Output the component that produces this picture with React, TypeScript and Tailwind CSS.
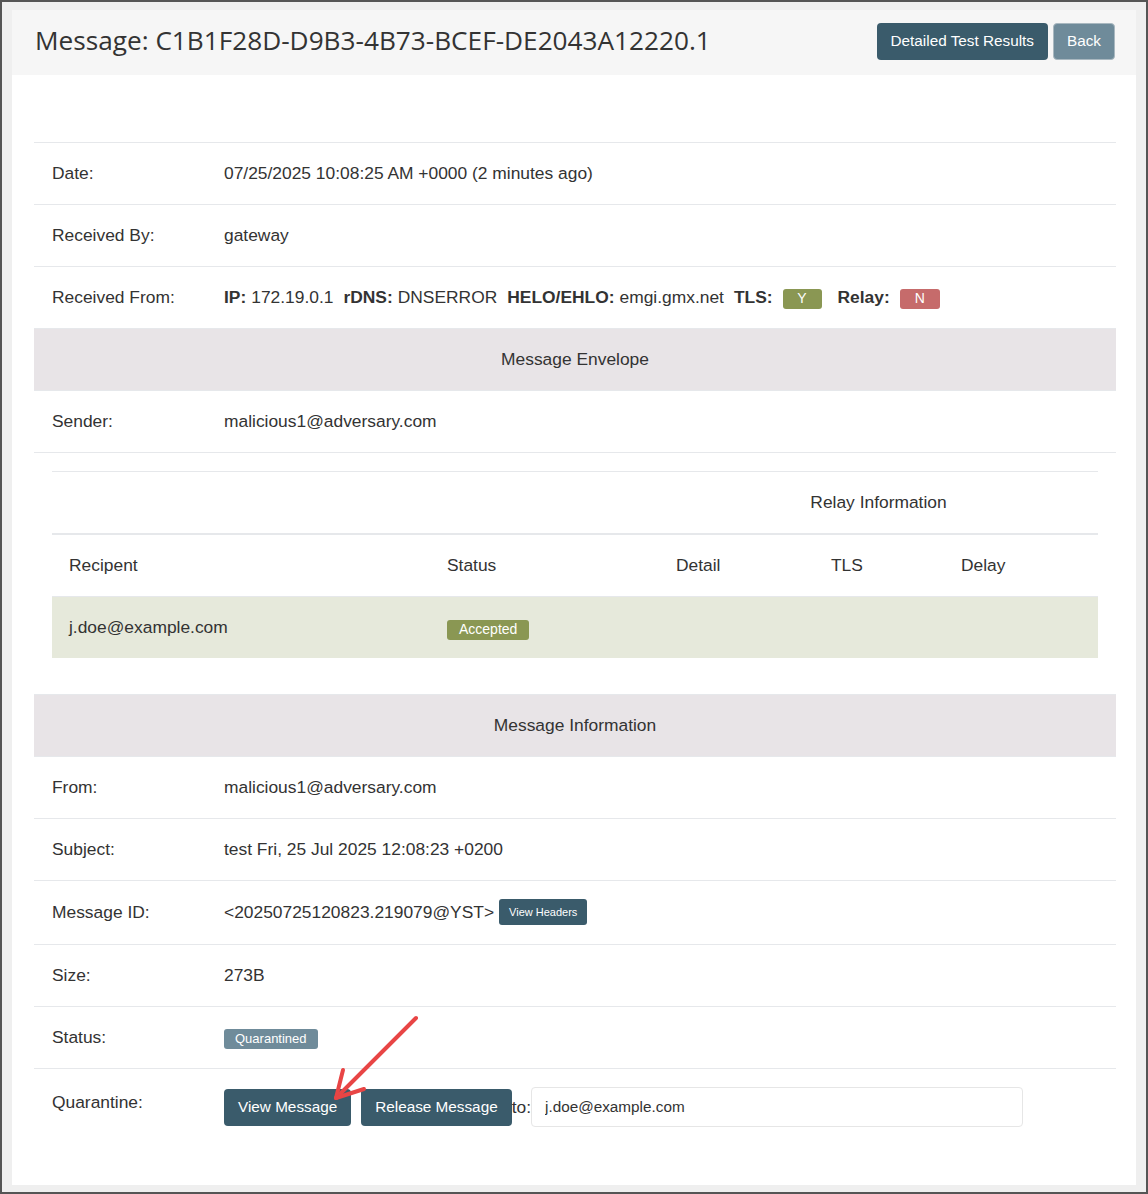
import React from 'react'

const font = { fontFamily: '"Liberation Sans", Arial, sans-serif' }

const Row = ({ label, children, tall }: { label: string; children: React.ReactNode; tall?: boolean }) => (
  <div className={`flex items-center border-t border-[#e6e8eb] ${tall ? 'h-[64px]' : 'h-[62px]'}`}>
    <div className="w-[190px] pl-[18px] shrink-0">{label}</div>
    <div className="flex items-center">{children}</div>
  </div>
)

const SectionHeader = ({ title }: { title: string }) => (
  <div className="h-[62px] flex items-center justify-center bg-[#e8e4e7] border-t border-[#e6e8eb]">{title}</div>
)

const Badge = ({ children, className }: { children: React.ReactNode; className: string }) => (
  <span className={`inline-flex items-center justify-center h-[20px] rounded-[3px] text-white ${className}`}>
    {children}
  </span>
)

export default function App() {
  return (
    <div
      className="relative h-[1194px] border-2 border-[#555] bg-[#efefef] px-[10px] pt-[8px] pb-[7px] text-[17.4px] text-[#333]"
      style={font}
    >
      <div className="h-full bg-white flex flex-col">
        {/* Header */}
        <div className="h-[65px] bg-[#f6f6f6] flex items-center justify-between pl-[23px] pr-[21px]">
          <h1 className="text-[26.2px] text-[#333] font-normal -mt-[4px]" style={{ fontFamily: '"Open Sans", sans-serif' }}>
            Message: C1B1F28D-D9B3-4B73-BCEF-DE2043A12220.1
          </h1>
          <div className="flex items-center gap-[5px] -mt-[2px]">
            <button className="h-[37px] px-[14px] rounded-[4px] bg-[#3a5b6b] text-white text-[15.3px]">
              Detailed Test Results
            </button>
            <button className="h-[37px] px-[13px] rounded-[4px] bg-[#6f8b9a] border border-[#a9b8c0] text-white text-[15.3px]">
              Back
            </button>
          </div>
        </div>

        {/* Body */}
        <div className="pl-[22px] pr-[20px] pt-[67px]">
          <Row label="Date:">07/25/2025 10:08:25 AM +0000 (2 minutes ago)</Row>
          <Row label="Received By:">gateway</Row>
          <Row label="Received From:">
            <b>IP:</b>
            <span className="ml-[5px]">172.19.0.1</span>
            <b className="ml-[10px]">rDNS:</b>
            <span className="ml-[5px]">DNSERROR</span>
            <b className="ml-[10px]">HELO/EHLO:</b>
            <span className="ml-[5px]">emgi.gmx.net</span>
            <b className="ml-[10px]">TLS:</b>
            <span className="ml-[10px]"><Badge className="w-[39px] text-[14px] bg-[#8a9753]">Y</Badge></span>
            <b className="ml-[16px]">Relay:</b>
            <span className="ml-[10px]"><Badge className="w-[40px] text-[14px] bg-[#c66b6b]">N</Badge></span>
          </Row>
          <SectionHeader title="Message Envelope" />
          <Row label="Sender:">malicious1@adversary.com</Row>

          {/* Relay table */}
          <div className="border-t border-[#e6e8eb] px-[18px] pt-[18px] pb-[36px]">
            <div className="border-t border-[#e6e8eb]">
              <div className="grid grid-cols-[607px_1fr] h-[63px] items-center border-b-2 border-[#e6e8eb]">
                <div />
                <div className="text-center">Relay Information</div>
              </div>
              <div className="grid grid-cols-[378px_229px_155px_130px_1fr] h-[61px] items-center">
                <div className="pl-[17px]">Recipent</div>
                <div className="pl-[17px]">Status</div>
                <div className="pl-[17px]">Detail</div>
                <div className="pl-[17px]">TLS</div>
                <div className="pl-[17px]">Delay</div>
              </div>
              <div className="grid grid-cols-[378px_229px_155px_130px_1fr] h-[62px] items-center bg-[#e6e9db] border-t border-[#e6e8eb]">
                <div className="pl-[17px]">j.doe@example.com</div>
                <div className="pl-[17px] pt-[2px]"><Badge className="px-[12px] text-[14px] bg-[#8a9753]">Accepted</Badge></div>
                <div />
                <div />
                <div />
              </div>
            </div>
          </div>

          <SectionHeader title="Message Information" />
          <Row label="From:">malicious1@adversary.com</Row>
          <Row label="Subject:">test Fri, 25 Jul 2025 12:08:23 +0200</Row>
          <Row label="Message ID:" tall>
            <span>&lt;20250725120823.219079@YST&gt;</span>
            <button className="ml-[5px] h-[26px] px-[10px] rounded-[3px] bg-[#3a5b6b] text-white text-[11px]">
              View Headers
            </button>
          </Row>
          <Row label="Size:">273B</Row>
          <Row label="Status:">
            <Badge className="px-[11px] text-[13px] bg-[#6f8b9a] mt-[2px]">Quarantined</Badge>
          </Row>
          <div className="flex border-t border-[#e6e8eb] pt-[18px] pb-[18px]">
            <div className="w-[190px] pl-[18px] shrink-0 pt-[2px]">Quarantine:</div>
            <div className="flex items-center">
              <button className="h-[37px] px-[14px] rounded-[4px] bg-[#3a5b6b] text-white text-[15.3px]">
                View Message
              </button>
              <button className="ml-[10px] h-[37px] px-[14px] rounded-[4px] bg-[#3a5b6b] text-white text-[15.3px]">
                Release Message
              </button>
              <span>to:</span>
              <input
                readOnly
                value="j.doe@example.com"
                className="w-[492px] h-[40px] border border-[#e6e6e6] rounded-[4px] px-[13px] text-[15.3px] text-[#333] outline-none"
                style={font}
              />
            </div>
          </div>
        </div>
      </div>

      {/* Annotation arrow */}
      <svg className="absolute left-[318px] top-[1008px]" width="110" height="96" viewBox="0 0 110 96">
        <g stroke="#e84545" strokeWidth="4" strokeLinecap="round" fill="none">
          <line x1="96" y1="8" x2="16" y2="88" />
          <line x1="16" y1="88" x2="23" y2="60" />
          <line x1="16" y1="88" x2="44" y2="79" />
        </g>
      </svg>
    </div>
  )
}
